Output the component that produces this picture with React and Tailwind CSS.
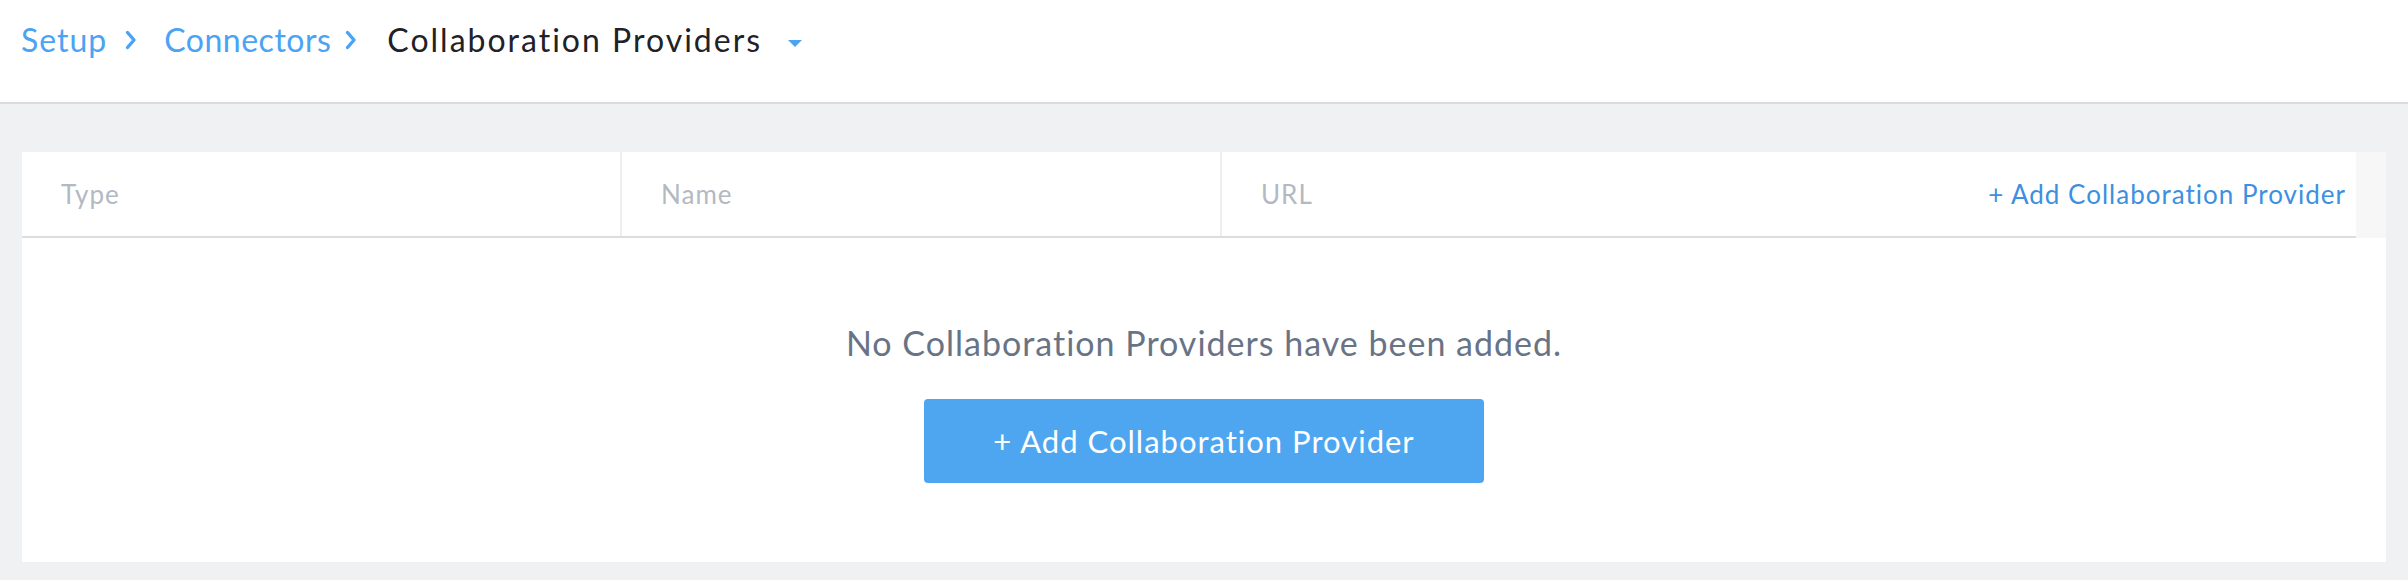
import React from 'react';

// Collaboration Providers — empty connectors list

const Chevron = () => (
  <svg width="12" height="20" viewBox="0 0 12 20" className="shrink-0" aria-hidden="true">
    <path d="M2.5 2.5 L9 10 L2.5 17.5" fill="none" stroke="#4aa3f3" strokeWidth="3.4" strokeLinecap="round" strokeLinejoin="round" />
  </svg>
);

const Caret = () => (
  <svg width="16" height="9" viewBox="0 0 16 9" aria-hidden="true">
    <path d="M1 1 L15 1 L8 8 Z" fill="#4aa3f3" />
  </svg>
);

const COLUMNS = ['Type', 'Name'];

export default function App() {
  return (
    <div
      className="min-h-[580px] bg-[#f0f1f3]"
      style={{ fontFamily: 'Lato, "Open Sans", sans-serif' }}
    >
      {/* ── Breadcrumb header ─────────────────────────────── */}
      <header className="flex h-[104px] items-start border-b-2 border-[#d8dbe0] bg-white pl-[21px] pt-[18px]">
        <nav className="flex items-center text-[32px] leading-[44px]">
          <a className="tracking-[1px] text-[#4aa3f3]">Setup</a>
          <span className="ml-[18px] mr-[27px] flex items-center"><Chevron /></span>
          <a className="tracking-[0.5px] text-[#4aa3f3]">Connectors</a>
          <span className="ml-[14px] mr-[30px] flex items-center"><Chevron /></span>
          <span className="tracking-[2px] text-[#1f2227]">Collaboration Providers</span>
          <span className="ml-[25px] mt-[6px] flex items-center"><Caret /></span>
        </nav>
      </header>

      {/* ── Table card ────────────────────────────────────── */}
      <div className="px-[22px] pb-[18px] pt-[48px]">
        <div className="bg-white">
          <div className="flex h-[86px]">
            <div className="flex flex-1 border-b-2 border-[#dddddd]">
              {COLUMNS.map((c) => (
                <div
                  key={c}
                  className="flex w-[600px] items-center border-r-2 border-[#efefef] pl-[39px] text-[26px] tracking-[1px] text-[#b3b9c3]"
                >
                  {c}
                </div>
              ))}
              <div className="flex flex-1 items-center justify-between pl-[39px] pr-[10px] text-[26px] tracking-[1px]">
                <span className="text-[#b3b9c3]">URL</span>
                <a className="text-[#3d8fe0]">+ Add Collaboration Provider</a>
              </div>
            </div>
            <div className="w-[30px] bg-[#f7f7f8]" />
          </div>

          <div className="flex h-[324px] flex-col items-center pt-[85px]">
            <p className="text-[34px] leading-[40px] tracking-[1px] text-[#687486]">
              No Collaboration Providers have been added.
            </p>
            <button
              type="button"
              className="mt-[36px] h-[84px] w-[560px] rounded-[4px] bg-[#4ea6f0] text-[31px] tracking-[1px] text-white"
            >
              + Add Collaboration Provider
            </button>
          </div>
        </div>
      </div>
    </div>
  );
}
